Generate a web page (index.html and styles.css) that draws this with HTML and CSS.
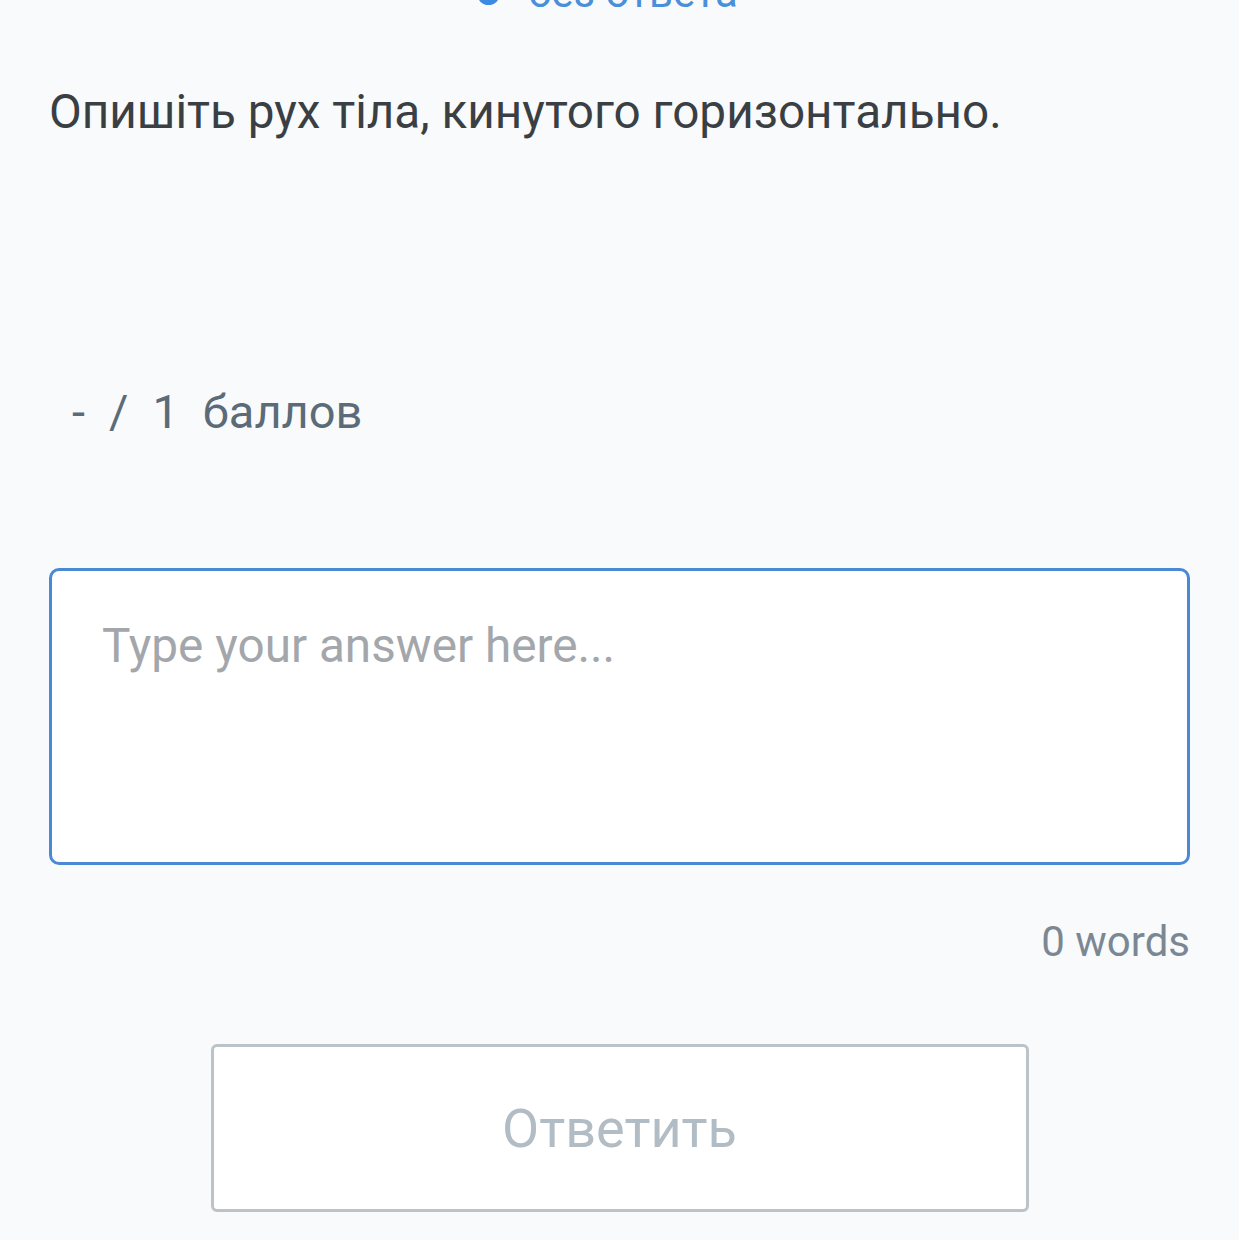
FILE: index.html
```html
<!DOCTYPE html>
<html lang="uk">
<head>
  <meta charset="UTF-8">
  <meta name="viewport" content="width=device-width, initial-scale=1.0">
  <title>Питання</title>
  <link rel="stylesheet" href="styles.css">
</head>
<body>
  <div class="status">
    <span class="status-dot"></span>
    <span class="status-text">без ответа</span>
  </div>

  <p class="question">Опишіть рух тіла, кинутого горизонтально.</p>

  <div class="score">
    <span>-</span>
    <span>/</span>
    <span>1</span>
    <span>баллов</span>
  </div>

  <textarea class="answer" placeholder="Type your answer here..."></textarea>

  <div class="word-count">0 words</div>

  <div class="actions">
    <button class="submit" disabled>Ответить</button>
  </div>
</body>
</html>
```

FILE: styles.css
```css
body {
  margin: 0;
  padding: 0 49px;
  background-color: #f8fafc;
  font-family: Roboto, "Noto Sans", sans-serif;
  overflow: hidden;
}

/* Status line, cut off at the top of the screen */
.status {
  display: flex;
  justify-content: center;
  align-items: center;
  gap: 28px;
  height: 50px;
  margin-top: -32px;
  padding-right: 24px;
}

.status-dot {
  width: 23px;
  height: 23px;
  border-radius: 50%;
  background-color: #3c8be0;
}

.status-text {
  font-size: 42px;
  line-height: 50px;
  color: #4a8fd9;
}

.question {
  margin: 64px 0 0;
  font-size: 47.7px;
  line-height: 60px;
  color: #3a3f44;
}

.score {
  display: flex;
  gap: 24px;
  margin-top: 240px;
  padding-left: 23px;
  font-size: 47px;
  line-height: 60px;
  color: #5b6b78;
}

.answer {
  display: block;
  box-sizing: border-box;
  width: 100%;
  height: 297px;
  margin-top: 126px;
  padding: 47px 50px;
  border: 3px solid #4a8ad4;
  border-radius: 10px;
  background-color: #ffffff;
  font-family: Roboto, "Noto Sans", sans-serif;
  font-size: 47.7px;
  resize: none;
  outline: none;
}

.answer::placeholder {
  color: #a3a7ab;
}

.word-count {
  margin-top: 47px;
  text-align: right;
  font-size: 42px;
  line-height: 60px;
  color: #7b8893;
}

.actions {
  display: flex;
  justify-content: center;
  margin-top: 72px;
}

.submit {
  width: 818px;
  height: 168px;
  border: 3px solid #bcc3c8;
  border-radius: 6px;
  background-color: #ffffff;
  font-family: Roboto, "Noto Sans", sans-serif;
  font-size: 54px;
  color: #b2bcc4;
}
```
